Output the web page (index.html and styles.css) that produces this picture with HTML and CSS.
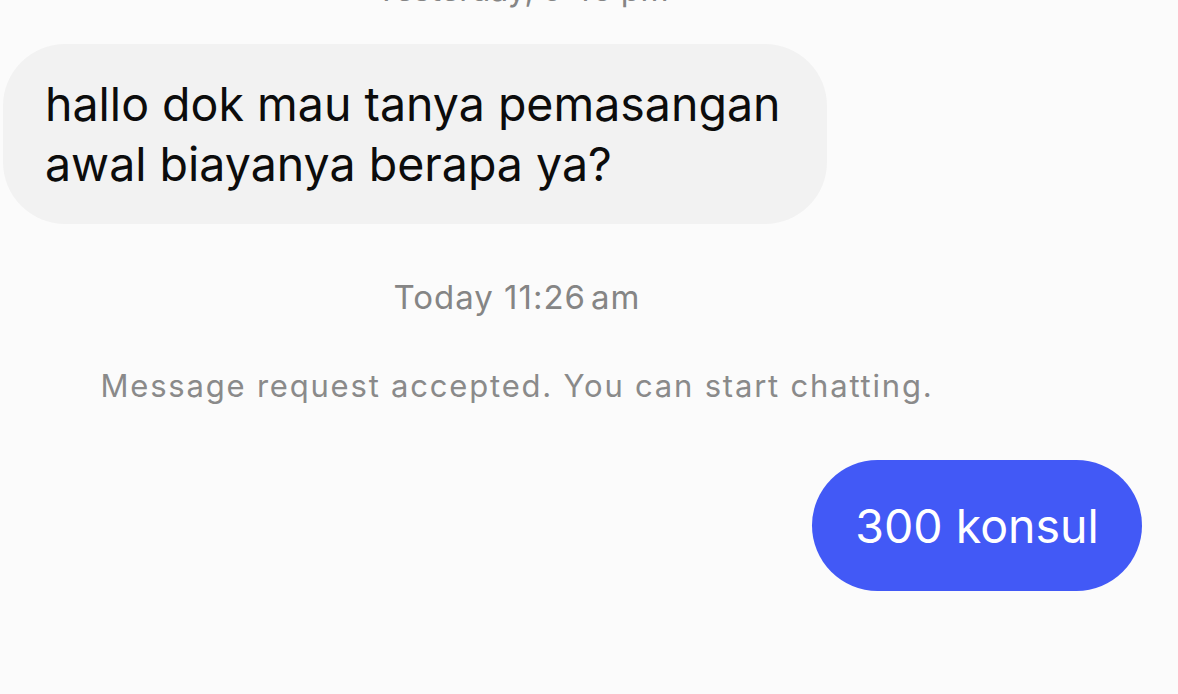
FILE: index.html
```html
<!DOCTYPE html>
<html lang="id">
<head>
<meta charset="utf-8">
<title>Chat</title>
<link rel="stylesheet" href="styles.css">
</head>
<body>
<main class="chat">
  <div class="stamp-row stamp-top"><span class="stamp stamp-prev">Yesterday, 5:46 pm</span></div>
  <div class="msg-row incoming">
    <div class="bubble gray">hallo dok mau tanya pemasangan<br>awal biayanya berapa ya?</div>
  </div>
  <div class="stamp-row stamp-today"><span class="stamp">Today 11:26<span class="thin"> </span>am</span></div>
  <div class="stamp-row notice-row"><span class="notice">Message request accepted. You can start chatting.</span></div>
  <div class="msg-row outgoing">
    <div class="bubble blue">300 konsul</div>
  </div>
</main>
</body>
</html>
```
FILE: styles.css
```css
html, body {
  margin: 0;
  padding: 0;
  background: #fbfbfb;
  height: 100%;
  overflow: hidden;
}
body {
  font-family: Inter, "Noto Sans", "Liberation Sans", sans-serif;
}
.chat {
  display: flex;
  flex-direction: column;
  width: 1142px;
}
.stamp-row {
  width: 1034px;
  display: flex;
  justify-content: center;
}
.stamp {
  font-size: 33px;
  letter-spacing: 1px;
  color: #858585;
  line-height: 40px;
}
.stamp-prev {
  letter-spacing: 0;
  font-size: 32px;
  padding-left: 10px;
}
.stamp-top {
  margin-top: -30px;
}
.thin { font-size: 14px; }
.msg-row { display: flex; }
.incoming { margin-top: 34px; padding-left: 3px; }
.outgoing { justify-content: flex-end; margin-top: 55px; }
.bubble {
  font-size: 46.5px;
  line-height: 60px;
}
.gray {
  background: #f2f2f2;
  color: #0c0c0c;
  width: 824px;
  box-sizing: border-box;
  padding: 30px 20px 30px 42px;
  border-radius: 62px;
}
.blue {
  background: #4259f6;
  color: #ffffff;
  width: 330px;
  height: 131px;
  box-sizing: border-box;
  display: flex;
  align-items: center;
  justify-content: center;
  border-radius: 66px;
}
.stamp-today { margin-top: 53px; }
.notice-row { margin-top: 43px; }
.notice {
  font-size: 31px;
  letter-spacing: 1.8px;
  line-height: 38px;
  color: #8a8a8a;
}
```
